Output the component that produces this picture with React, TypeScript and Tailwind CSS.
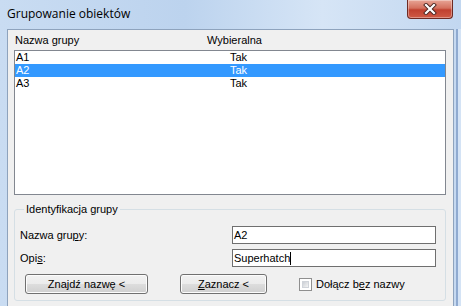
import React from 'react';

const ui = "font-['Liberation_Sans',Arial,sans-serif] text-[11px] leading-[13px] text-black";

const Btn: React.FC<{ children: React.ReactNode; className?: string }> = ({ children, className }) => (
  <button
    className={`h-[20px] rounded-[3px] border border-[#707070] bg-[linear-gradient(#f2f2f2_0%,#ebebeb_50%,#dddddd_51%,#cfcfcf_100%)] shadow-[inset_0_0_0_1px_#fcfcfc] flex items-center justify-center ${className ?? ''}`}
  >
    {children}
  </button>
);

const rows = [
  { name: 'A1', sel: 'Tak' },
  { name: 'A2', sel: 'Tak', active: true },
  { name: 'A3', sel: 'Tak' },
];

export default function App() {
  return (
    <div className={`w-[461px] h-[306px] overflow-hidden flex flex-col bg-[linear-gradient(90deg,#c9dcf2_0%,#bcd3ee_40%,#d6e5f6_70%,#c2d7f0_100%)] ${ui}`}>
      {/* Title bar */}
      <div className="h-[29px] flex items-start justify-between shrink-0">
        <span className="pl-[7px] pt-[6px] font-['Open_Sans',sans-serif] text-[12px] leading-[16px] text-black">
          Grupowanie obiektów
        </span>
        <div className="mr-[8px] w-[46px] h-[19px] rounded-b-[4px] border border-t-0 border-[#6e2a23] bg-[linear-gradient(#e8a596_0%,#d4705e_45%,#c0402f_55%,#cf5a45_100%)] shadow-[inset_0_0_0_1px_rgba(255,255,255,0.35)] flex items-center justify-center">
          <svg width="14" height="12" viewBox="0 0 14 12">
            <path d="M3 2 L11 10 M11 2 L3 10" stroke="#4a2420" strokeWidth="4" strokeLinecap="square" />
            <path d="M3 2 L11 10 M11 2 L3 10" stroke="#ffffff" strokeWidth="2.2" strokeLinecap="square" />
          </svg>
        </div>
      </div>

      {/* Client area */}
      <div className="flex-1 flex">
        <div className="flex-1 ml-[7px] border border-b-0 border-[#8ea3bd] bg-[#f0f0f0] flex flex-col">
          {/* Header */}
          <div className="h-[20px] flex items-center">
            <span className="ml-[7px] w-[192px]">Nazwa grupy</span>
            <span>Wybieralna</span>
          </div>
          {/* List */}
          <div className="ml-[6px] w-[432px] h-[145px] border border-[#828790] bg-white">
            {rows.map((r) => (
              <div
                key={r.name}
                className={`h-[13px] flex items-center ${r.active ? 'bg-[#3399ff] text-white' : ''}`}
              >
                <span className="pl-[1px] w-[215px]">{r.name}</span>
                <span>{r.sel}</span>
              </div>
            ))}
          </div>

          {/* Group */}
          <fieldset className="mt-[8px] ml-[6px] w-[432px] h-[98px] border border-[#d5dfe5] rounded-[3px] px-[4px] pb-[6px]">
            <legend className="ml-[5px] px-[2px]">Identyfikacja grupy</legend>
            <div className="mt-[10px] h-[18px] flex items-center">
              <span className="w-[213px] pl-[1px]">
                Nazwa gru<span className="underline">p</span>y:
              </span>
              <div className="w-[204px] h-[18px] border border-[#6f6f6f] bg-white flex items-center pl-[1px]">A2</div>
            </div>
            <div className="mt-[5px] h-[18px] flex items-center">
              <span className="w-[213px] pl-[1px]">
                Opi<span className="underline">s</span>:
              </span>
              <div className="w-[204px] h-[18px] border border-[#6f6f6f] bg-white flex items-center pl-[1px]">
                Superhatch<span className="inline-block w-[1px] h-[13px] bg-black" />
              </div>
            </div>
            <div className="mt-[7px] h-[20px] flex items-center">
              <Btn className="ml-[6px] w-[123px]">
                Zna<span className="underline">j</span>dź nazwę &lt;
              </Btn>
              <Btn className="ml-[32px] w-[87px]">
                <span className="underline">Z</span>aznacz &lt;
              </Btn>
              <div className="ml-[32px] w-[13px] h-[13px] border border-[#8f8f8f] bg-white p-[2px]">
                <div className="w-full h-full bg-[linear-gradient(135deg,#cbcfd5,#f4f4f4)] border border-[#d0d4da]" />
              </div>
              <span className="ml-[4px]">
                Dołącz b<span className="underline">e</span>z nazwy
              </span>
            </div>
          </fieldset>
        </div>
        {/* Right frame */}
        <div className="w-[7px] flex">
          <div className="w-[2px] bg-[#c6d9f0]" />
          <div className="w-[2px] bg-[#8faad0]" />
          <div className="flex-1 bg-[#d4e3f5]" />
        </div>
      </div>
    </div>
  );
}
